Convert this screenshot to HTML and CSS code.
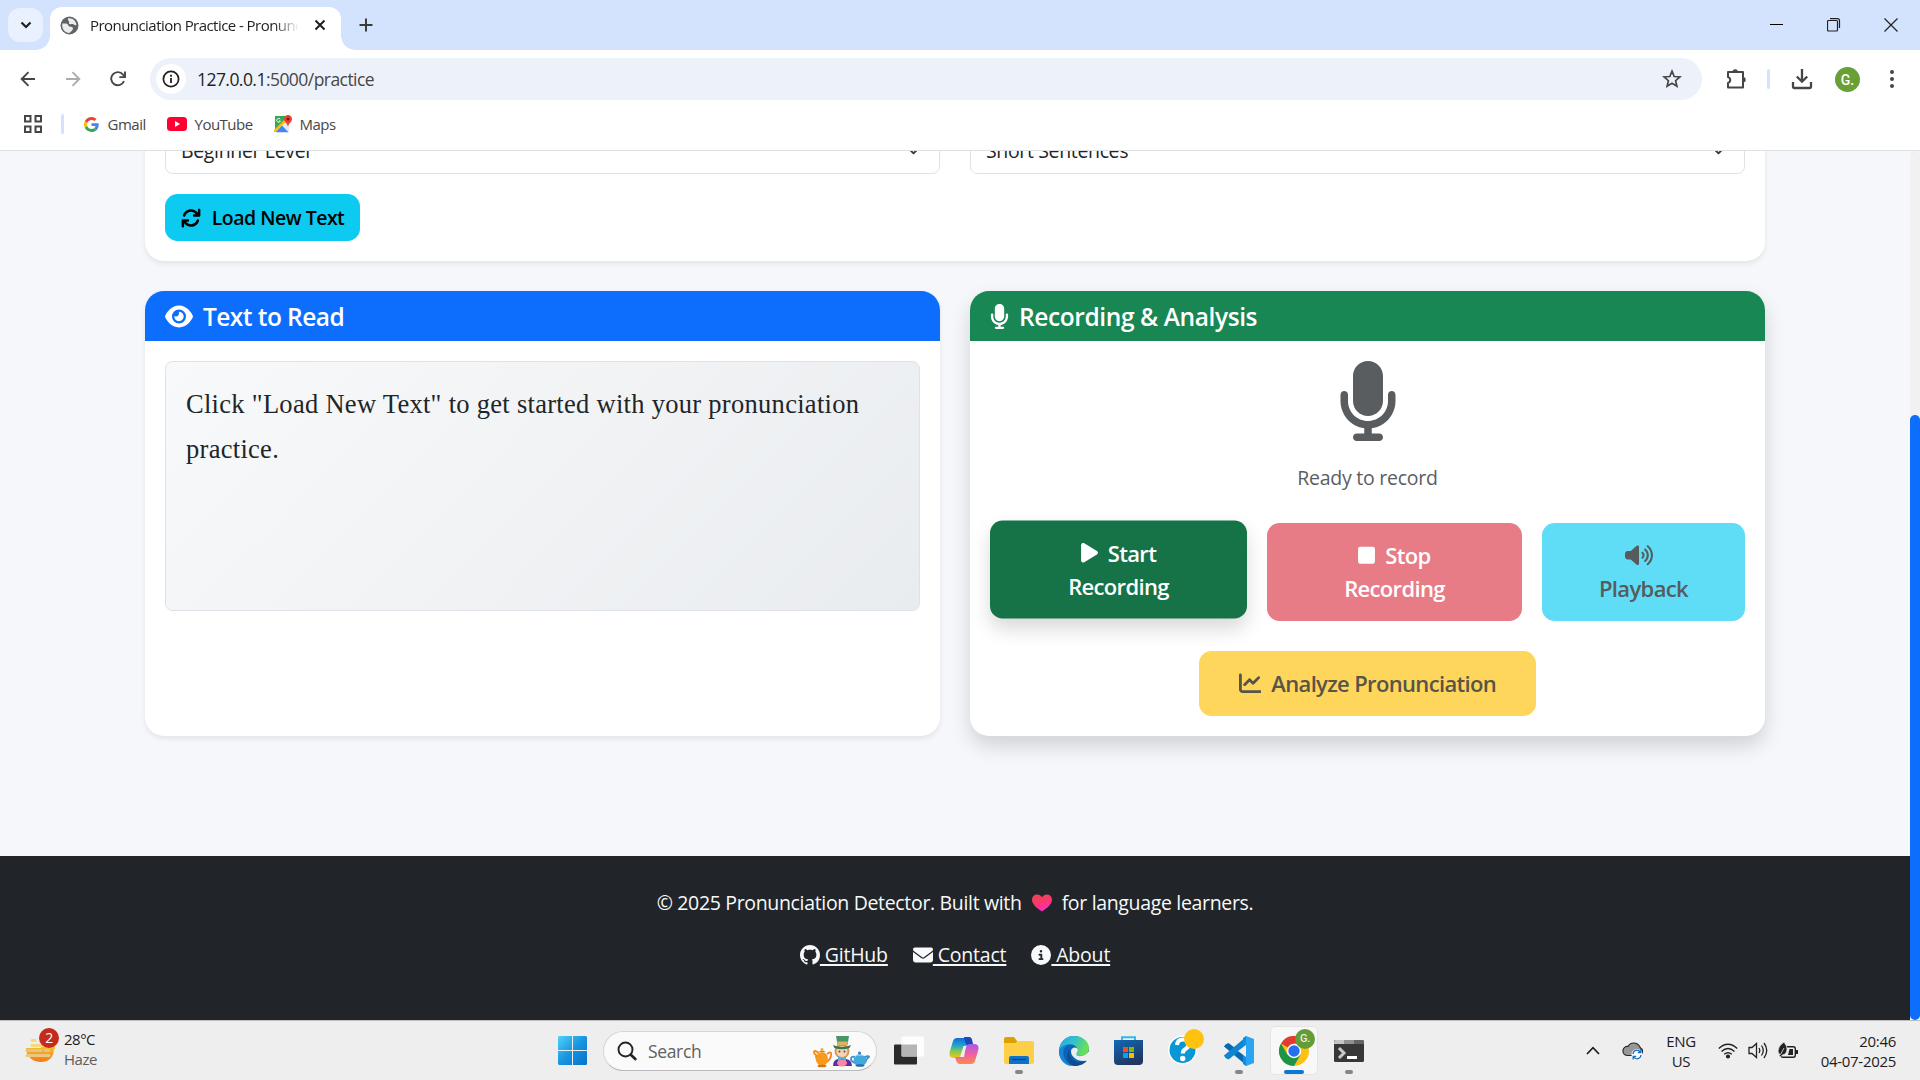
FILE: index.html
```html
<!DOCTYPE html>
<html lang="en">
<head>
<meta charset="utf-8">
<title>Pronunciation Practice - Pronunciation Detector</title>
<link rel="stylesheet" href="styles.css">
</head>
<body>
<svg class="sprite" aria-hidden="true">
  <symbol id="mic" viewBox="0 0 384 512"><path d="M192 0C139 0 96 43 96 96V256c0 53 43 96 96 96s96-43 96-96V96c0-53-43-96-96-96zM64 216c0-13.300-10.700-24-24-24s-24 10.700-24 24v40c0 89.100 66.200 162.700 152 174.400V464H120c-13.300 0-24 10.700-24 24s10.700 24 24 24h144c13.300 0 24-10.700 24-24s-10.700-24-24-24H216V430.400c85.800-11.700 152-85.300 152-174.400V216c0-13.300-10.700-24-24-24s-24 10.700-24 24v40c0 70.700-57.300 128-128 128s-128-57.300-128-128V216z"/></symbol>
</svg>

<header class="browser">
  <div class="tabstrip">
    <button class="tab-search"><svg width="12" height="8" viewBox="0 0 12 8"><path d="M1.500 1.500 6 6l4.500-4.500" fill="none" stroke="#1f1f1f" stroke-width="2.200"/></svg></button>
    <div class="tab">
      <svg width="19" height="19" viewBox="0 0 19 19"><circle cx="9.500" cy="9.500" r="9" fill="#5f6368"/><path d="M2.500 7.500c2 .2 3.500-.3 5 .8 1.300 1 .4 1.700 2 2.200 1.700.5 3.500.3 3.500 2 0 1.500-1.300 2.300-2.500 3.500-.8.8-1 1-2 .9C4.500 16.300 2.200 13 2.200 9.500zM8 2.300C7.500 4 8.500 4.500 9 5.500c.6 1.300-.8 1.700.5 2.400 1.500.8 3-.3 4.200.6 1 .7 1.300.8 2.800.6C16.300 5.500 13.500 2.300 9.500 2.200z" fill="#fff" opacity=".88"/></svg>
      <span class="tab-title">Pronunciation Practice - Pronunciation</span>
      <svg width="12" height="12" viewBox="0 0 12 12"><path d="M1.500 1.500l9 9m0-9-9 9" stroke="#1f1f1f" stroke-width="2"/></svg>
    </div>
    <svg class="new-tab" width="14" height="14" viewBox="0 0 14 14"><path d="M7 .5v13M.5 7h13" stroke="#3c3c3c" stroke-width="2"/></svg>
    <div class="window-controls">
      <svg width="14" height="14" viewBox="0 0 14 14"><path d="M0 6.500h13" stroke="#000"/></svg>
      <svg width="14" height="14" viewBox="0 0 14 14" fill="none" stroke="#222"><rect x=".5" y="2.500" width="10" height="10.500" rx="1" stroke-width="1.200"/><path d="M3 .7h7.500q2 0 2 2V10" stroke-width="1.200"/></svg>
      <svg width="14" height="14" viewBox="0 0 14 14"><path d="M.5.5l13 13m0-13-13 13" stroke="#222" stroke-width="1.200"/></svg>
    </div>
  </div>
  <div class="toolbar">
    <nav class="nav-buttons">
      <svg width="16" height="16" viewBox="0 0 16 16" fill="none" stroke="#454746" stroke-width="1.900"><path d="M15 8H2M8.500 1.200 1.700 8l6.800 6.800"/></svg>
      <svg width="16" height="16" viewBox="0 0 16 16" fill="none" stroke="#acacac" stroke-width="1.900"><path d="M1 8h13M7.500 1.200 14.300 8l-6.800 6.800"/></svg>
      <svg width="16" height="16" viewBox="0 0 16 16" fill="none" stroke="#454746" stroke-width="1.900"><path d="M14 10a6.600 6.600 0 1 1-1-6.400l1.500 1.700"/><path d="M15 .5v5.600H9.300"/></svg>
    </nav>
    <div class="omnibox">
      <span class="site-info"><svg width="18" height="18" viewBox="0 0 18 18"><circle cx="9" cy="9" r="7.600" fill="none" stroke="#1f1f1f" stroke-width="1.700"/><path d="M9 8v5M9 4.800v2" stroke="#1f1f1f" stroke-width="1.800"/></svg></span>
      <span class="url">127.0.0.1<i>:5000/practice</i></span>
      <svg class="star" width="20" height="20" viewBox="0 0 20 20"><path d="M10 2.200l2.200 5.300 5.700.5-4.300 3.700 1.300 5.600-4.900-3-4.900 3 1.300-5.600L2.100 8l5.700-.5z" fill="none" stroke="#454746" stroke-width="1.700"/></svg>
    </div>
    <div class="toolbar-actions">
      <svg width="22" height="22" viewBox="0 0 22 22"><path d="M3 4h15v15.500H3v-4.600a3 3 0 0 0 0-5.800z" fill="none" stroke="#454746" stroke-width="2" stroke-linejoin="round"/><path d="M7.500 4a2.700 2.700 0 0 1 5.400 0zM18 9a2.700 2.700 0 0 1 0 5.400z" fill="#454746"/></svg>
      <span class="divider"></span>
      <svg width="22" height="22" viewBox="0 0 22 22" fill="none" stroke="#454746" stroke-width="2.300"><path d="M11 1v12M5.800 8.500 11 13.700l5.200-5.200M2 14v4.500q0 1.500 1.500 1.500h15q1.500 0 1.500-1.500V14"/></svg>
      <span class="avatar">G.</span>
      <svg width="4" height="18" viewBox="0 0 4 18" fill="#454746"><circle cx="2" cy="2" r="2"/><circle cx="2" cy="9" r="2"/><circle cx="2" cy="16" r="2"/></svg>
    </div>
  </div>
  <div class="bookmarks">
    <svg class="apps" width="18" height="18" viewBox="0 0 18 18" fill="none" stroke="#454746" stroke-width="2"><path d="M1 1h5.500v5.500H1zM11.500 1H17v5.500h-5.500zM1 11.500h5.500V17H1zM11.500 11.500H17V17h-5.500z"/></svg>
    <span class="divider"></span>
    <a class="bm gmail"><svg width="15" height="15" viewBox="0 0 48 48"><path fill="#EA4335" d="M24 9.500c3.540 0 6.710 1.220 9.210 3.600l6.850-6.850C35.900 2.380 30.470 0 24 0 14.620 0 6.510 5.380 2.560 13.220l7.980 6.190C12.430 13.720 17.740 9.500 24 9.500z"/><path fill="#4285F4" d="M46.980 24.550c0-1.570-.15-3.090-.38-4.550H24v9.020h12.940c-.58 2.960-2.260 5.480-4.780 7.180l7.730 6c4.510-4.180 7.090-10.360 7.090-17.650z"/><path fill="#FBBC05" d="M10.530 28.590c-.48-1.450-.76-2.990-.76-4.590s.27-3.140.76-4.590l-7.980-6.190C.92 16.460 0 20.120 0 24s.92 7.540 2.560 10.780l7.970-6.190z"/><path fill="#34A853" d="M24 48c6.480 0 11.930-2.130 15.890-5.810l-7.730-6c-2.150 1.450-4.920 2.300-8.160 2.300-6.260 0-11.570-4.220-13.470-9.910l-7.980 6.190C6.510 42.620 14.620 48 24 48z"/></svg><span>Gmail</span></a>
    <a class="bm youtube"><svg width="20" height="14" viewBox="0 0 20 14"><rect width="20" height="14" rx="3.500" fill="#ff0033"/><path d="M8 4l5 3-5 3z" fill="#fff"/></svg><span>YouTube</span></a>
    <a class="bm maps"><svg width="18" height="18" viewBox="0 0 18 18"><path d="M1 1h13v16H1z" fill="#34a853"/><path d="M0 17 13 4l2 4v9z" fill="#e8eaed"/><path d="M0 15 11 4l2 1.500L1 17H0z" fill="#fbbc04"/><path d="M1.500 17.200 8 10.500l6.500 6.700z" fill="#4285f4"/><path d="M14 0a4 4 0 0 1 4 4.200C18 7 14.500 8 14 12c-.5-4-4-5-4-7.800A4 4 0 0 1 14 0z" fill="#ea4335"/><circle cx="14" cy="4" r="1.500" fill="#811411"/><path d="M6.300 4.400A1.900 1.900 0 1 0 6.400 6H4.800" stroke="#fff" stroke-width=".9" fill="none"/></svg><span>Maps</span></a>
  </div>
</header>

<div class="viewport">
  <div class="page">
    <main class="container">
      <section class="card settings">
        <div class="fields">
          <div class="select"><span>Beginner Level</span><svg width="15" height="15" viewBox="0 0 16 16"><path d="m2 5 6 6 6-6" fill="none" stroke="#343a40" stroke-width="2" stroke-linecap="round" stroke-linejoin="round"/></svg></div>
          <div class="select"><span>Short Sentences</span><svg width="15" height="15" viewBox="0 0 16 16"><path d="m2 5 6 6 6-6" fill="none" stroke="#343a40" stroke-width="2" stroke-linecap="round" stroke-linejoin="round"/></svg></div>
        </div>
        <button class="btn load"><svg width="20" height="20" viewBox="0 0 512 512"><path d="M464 16c-17.670 0-32 14.310-32 32v74.090C392.100 66.520 327.400 32 256 32 161.500 32 78.590 92.340 49.580 182.200c-5.438 16.810 3.797 34.880 20.610 40.280 16.890 5.500 34.880-3.812 40.300-20.590C130.900 138.500 189.400 96 256 96c50.500 0 96.260 24.550 124.400 64H336c-17.670 0-32 14.310-32 32s14.330 32 32 32h128c17.670 0 32-14.310 32-32V48C496 30.310 481.700 16 464 16zM441.800 289.600c-16.920-5.438-34.880 3.812-40.300 20.590C381.100 373.500 322.600 416 256 416c-50.500 0-96.250-24.550-124.400-64H176c17.670 0 32-14.310 32-32s-14.330-32-32-32h-128c-17.670 0-32 14.310-32 32v144c0 17.690 14.330 32 32 32s32-14.310 32-32v-74.090C119.900 445.500 184.600 480 255.100 480c94.450 0 177.400-60.340 206.400-150.200C467.900 313 458.600 294.100 441.800 289.600z"/></svg><span>Load New Text</span></button>
      </section>

      <div class="panels">
        <section class="card">
          <h5 class="card-header primary"><svg width="28" height="25" viewBox="0 0 576 512"><path d="M288 32c-80.800 0-145.500 36.800-192.600 80.600C48.600 156 17.300 208 2.500 243.700c-3.300 7.900-3.300 16.700 0 24.600C17.300 304 48.600 356 95.400 399.400 142.500 443.200 207.200 480 288 480s145.500-36.800 192.600-80.600c46.800-43.500 78.100-95.400 93-131.100 3.300-7.900 3.300-16.700 0-24.600-14.900-35.700-46.200-87.700-93-131.100C433.500 68.800 368.800 32 288 32zM144 256a144 144 0 1 1 288 0 144 144 0 1 1-288 0zm144-64c0 35.300-28.700 64-64 64-7.100 0-13.900-1.200-20.300-3.300-5.500-1.800-11.900 1.600-11.700 7.400.3 6.900 1.300 13.800 3.200 20.700 13.700 51.200 66.400 81.600 117.600 67.900s81.600-66.400 67.900-117.600c-11.100-41.500-47.800-69.400-88.600-71.100-5.800-.2-9.200 6.100-7.400 11.700 2.100 6.400 3.300 13.200 3.300 20.300z"/></svg><span>Text to Read</span></h5>
          <div class="card-body">
            <p class="reading">Click "Load New Text" to get started with your pronunciation practice.</p>
          </div>
        </section>
        <section class="card raised">
          <h5 class="card-header success"><svg width="19" height="25"><use href="#mic"/></svg><span>Recording &amp; Analysis</span></h5>
          <div class="card-body recorder">
            <svg class="big-mic" width="60" height="80"><use href="#mic"/></svg>
            <p class="status">Ready to record</p>
            <div class="controls">
              <button class="btn lg start"><span class="line"><svg width="17" height="22.500" viewBox="0 0 384 512"><path d="M73 39c-14.800-9.100-33.400-9.400-48.500-.9S0 62.600 0 80V432c0 17.400 9.400 33.400 24.500 41.900s33.700 8.100 48.500-.9L361 297c14.300-8.700 23-24.200 23-41s-8.700-32.200-23-41L73 39z"/></svg>Start</span><span>Recording</span></button>
              <button class="btn lg stop"><span class="line"><svg width="17" height="22.500" viewBox="0 0 384 512"><path d="M0 112c0-27 21-48 48-48H336c27 0 48 21 48 48V400c0 27-21 48-48 48H48c-27 0-48-21-48-48V112z"/></svg>Stop</span><span>Recording</span></button>
              <button class="btn lg play"><span class="line"><svg width="28" height="22.500" viewBox="0 0 640 512"><path d="M533.600 32.500C598.500 85.300 640 165.800 640 256s-41.500 170.800-106.400 223.500c-10.300 8.400-25.400 6.800-33.800-3.500s-6.800-25.400 3.500-33.800C557.500 398.200 592 331.200 592 256s-34.500-142.200-88.700-186.300c-10.300-8.400-11.800-23.500-3.500-33.800s23.500-11.800 33.800-3.500zM473.100 107c43.200 35.200 70.900 88.900 70.900 149s-27.700 113.800-70.900 149c-10.300 8.400-25.400 6.800-33.800-3.500s-6.800-25.400 3.500-33.800C475.300 341.300 496 301.100 496 256s-20.700-85.300-53.200-111.800c-10.300-8.400-11.800-23.500-3.500-33.800s23.500-11.800 33.800-3.500zm-60.500 74.500C434.100 199.100 448 225.900 448 256s-13.900 56.900-35.400 74.500c-10.300 8.400-25.400 6.800-33.800-3.500s-6.800-25.400 3.500-33.800C393.100 284.400 400 271 400 256s-6.900-28.400-17.700-37.300c-10.300-8.400-11.800-23.500-3.500-33.800s23.500-11.800 33.800-3.500zM301.100 34.800C312.600 40 320 51.400 320 64V448c0 12.600-7.400 24-18.900 29.200s-25 3.100-34.400-5.300L131.800 352H64c-35.300 0-64-28.700-64-64V224c0-35.300 28.700-64 64-64h67.800L266.700 40.100c9.400-8.400 22.900-10.400 34.400-5.300z"/></svg></span><span>Playback</span></button>
            </div>
            <button class="btn lg analyze"><span class="line"><svg width="22.500" height="22.500" viewBox="0 0 512 512"><path d="M64 64c0-17.700-14.300-32-32-32S0 46.300 0 64V400c0 44.200 35.800 80 80 80H480c17.700 0 32-14.300 32-32s-14.300-32-32-32H80c-8.800 0-16-7.200-16-16V64zm406.600 86.600c12.500-12.500 12.500-32.800 0-45.300s-32.800-12.500-45.300 0L320 210.700l-57.400-57.400c-12.500-12.500-32.800-12.500-45.300 0l-112 112c-12.500 12.500-12.500 32.800 0 45.300s32.800 12.500 45.300 0L240 221.300l57.400 57.400c12.500 12.500 32.800 12.500 45.300 0l128-128z"/></svg>Analyze Pronunciation</span></button>
          </div>
        </section>
      </div>
    </main>

    <footer class="footer">
      <p class="copyright"><span>© 2025 Pronunciation Detector. Built with</span><svg width="20" height="18" viewBox="0 0 20 18"><defs><linearGradient id="heart" x1="0" y1="0" x2=".4" y2="1"><stop offset="0" stop-color="#e8455a"/><stop offset=".5" stop-color="#fb3a62"/><stop offset="1" stop-color="#fb2cc0"/></linearGradient></defs><path d="M10 17.500C4 13.500 0 10 0 5.500A5 5 0 0 1 5 .5c2.300 0 4 1.200 5 2.800C11 1.700 12.700.5 15 .5a5 5 0 0 1 5 5c0 4.500-4 8-10 12z" fill="url(#heart)"/></svg><span>for language learners.</span></p>
      <nav class="links">
        <a><svg width="20" height="20" viewBox="0 0 16 16"><path d="M8 0C3.580 0 0 3.580 0 8c0 3.540 2.290 6.530 5.470 7.590.4.070.55-.17.55-.38 0-.19-.01-.82-.01-1.490-2.010.37-2.530-.49-2.690-.94-.09-.23-.48-.94-.82-1.130-.28-.15-.68-.52-.01-.53.63-.01 1.080.58 1.230.82.72 1.210 1.870.87 2.330.66.070-.52.280-.87.510-1.070-1.780-.2-3.640-.89-3.640-3.950 0-.87.310-1.590.820-2.150-.08-.2-.36-1.020.08-2.120 0 0 .67-.21 2.200.82.640-.18 1.320-.27 2-.27s1.360.09 2 .27c1.530-1.040 2.200-.82 2.200-.82.440 1.100.160 1.920.080 2.120.510.560.820 1.270.820 2.150 0 3.070-1.870 3.750-3.650 3.950.290.250.540.730.540 1.480 0 1.070-.01 1.930-.01 2.200 0 .210.150.460.550.380A8.010 8.010 0 0 0 16 8c0-4.420-3.580-8-8-8z"/></svg><span>&nbsp;GitHub</span></a>
        <a><svg width="20" height="20" viewBox="0 0 512 512"><path d="M48 64C21.500 64 0 85.500 0 112c0 15.100 7.100 29.300 19.200 38.400L236.800 313.600c11.400 8.500 27 8.500 38.400 0L492.800 150.400c12.100-9.100 19.200-23.300 19.200-38.400 0-26.500-21.500-48-48-48H48zM0 176V384c0 35.300 28.700 64 64 64H448c35.300 0 64-28.700 64-64V176L294.400 339.200c-22.800 17.100-54 17.100-76.800 0L0 176z"/></svg><span>&nbsp;Contact</span></a>
        <a><svg width="20" height="20" viewBox="0 0 512 512"><path d="M256 512A256 256 0 1 0 256 0a256 256 0 1 0 0 512zM216 336h24V272H216c-13.300 0-24-10.700-24-24s10.700-24 24-24h48c13.300 0 24 10.700 24 24v88h8c13.300 0 24 10.700 24 24s-10.700 24-24 24H216c-13.300 0-24-10.700-24-24s10.700-24 24-24zm40-208a32 32 0 1 1 0 64 32 32 0 1 1 0-64z"/></svg><span>&nbsp;About</span></a>
      </nav>
    </footer>
  </div>
  <div class="scrollbar"><div class="thumb"></div></div>
</div>

<div class="taskbar">
  <div class="weather">
    <div class="weather-icon">
      <svg width="32" height="28" viewBox="0 0 32 28"><defs><linearGradient id="sun" x1="0" y1="0" x2="0" y2="1"><stop offset="0" stop-color="#f7b92c"/><stop offset="1" stop-color="#f07a17"/></linearGradient></defs><path d="M1 12h28q0 14-14 14Q5 26 1 15z" fill="url(#sun)"/><path d="M16 8h14v5H16z" fill="#f7b92c"/><g stroke-linecap="round" stroke-width="3"><path d="M7 4.500h3M7 9.500h12" stroke="#f6d77c"/><path d="M2 14.500h14M20 14.500h4" stroke="#dcc788"/><path d="M2 19.500h22" stroke="#edc77c"/></g></svg>
      <span class="count">2</span>
    </div>
    <div class="weather-text"><span>28°C</span><span class="muted">Haze</span></div>
  </div>
  <div class="center">
    <svg class="start-logo" width="29" height="29" viewBox="0 0 29 29"><defs><linearGradient id="win" x1="0" y1="0" x2="1" y2="1"><stop offset="0" stop-color="#4fd2fb"/><stop offset=".5" stop-color="#1795e0"/><stop offset="1" stop-color="#0670cc"/></linearGradient></defs><path d="M1 0h13v14H0V1zM15 0h13l1 1v13H15zM0 15h14v14H1l-1-1zM15 15h14v13l-1 1H15z" fill="url(#win)"/></svg>
    <div class="search">
      <svg width="20" height="20" viewBox="0 0 20 20" fill="none" stroke="#252525" stroke-linecap="round"><circle cx="8.500" cy="8.500" r="7" stroke-width="1.900"/><path d="M13.800 13.800l4.500 4.200" stroke-width="2.700"/></svg>
      <span>Search</span>
      <svg class="doodle" width="57" height="34" viewBox="0 0 57 34">
        <path d="M6 20q-4-5-5-2 0 2 2 3 0 5 3 8M14 20q5-4 4 2-1 4-4 6" fill="none" stroke="#f08314" stroke-width="1.800"/><ellipse cx="9" cy="25" rx="6" ry="7" fill="#f89a1c"/><path d="M5 18q4-3 8 0z" fill="#ed7a10"/><circle cx="9" cy="15.500" r="1.500" fill="#f5a63a"/><ellipse cx="9" cy="32" rx="4.500" ry="1.300" fill="#dc6f10"/>
        <path d="M20 32q0-6 5-7h8q6 1 6 7z" fill="#5b2fa3"/><circle cx="29" cy="17" r="7.500" fill="#d8934e"/><circle cx="29" cy="17.500" r="5.500" fill="#fbd0ae"/><path d="M23 2h13l-1.500 9h-10z" fill="#4b9468"/><path d="M24.300 7.500h10.500l-.6 3.500h-9.400z" fill="#d8b55e"/><path d="M20 11q9 4 18 0l-1.500 3q-7.500 2.500-15 0z" fill="#2f7a51"/><circle cx="26.500" cy="17.500" r="1" fill="#245378"/><circle cx="31.500" cy="17.500" r="1" fill="#245378"/><path d="M25 22l4 2 4-2v5l-4-2-4 2z" fill="#45b5ea"/><ellipse cx="29" cy="29" rx="5" ry="3.500" fill="#fb87a4"/>
        <path d="M50 24q6-3 6-1-2 1-4 6M42 23q-4-1-4 2t5 4" fill="none" stroke="#3b91ca" stroke-width="1.800"/><ellipse cx="47" cy="26.500" rx="6.500" ry="5.500" fill="#43a9dd"/><path d="M42 22q5-4 9 0z" fill="#80c9ec"/><circle cx="46.500" cy="19" r="1.500" fill="#2c7dba"/><ellipse cx="47" cy="31.500" rx="4.500" ry="1.300" fill="#286ca7"/>
      </svg>
    </div>
    <div class="apps-row">
      <span class="app"><svg width="30" height="30" viewBox="0 0 30 30"><rect y="8.500" width="23" height="20" rx="1" fill="#2a2a29"/><rect x="7.500" y=".5" width="22.500" height="20" rx="1" fill="#fdfdfd"/><path d="M8 8.500h15v12H8z" fill="#b5b5b5"/></svg></span>
      <span class="app"><svg width="30" height="28" viewBox="0 0 30 28"><defs><linearGradient id="cpA" x1="0" y1="0" x2="0" y2="1"><stop offset="0" stop-color="#1b67d3"/><stop offset=".35" stop-color="#1e9fd9"/><stop offset=".65" stop-color="#7fc950"/><stop offset="1" stop-color="#f6c51b"/></linearGradient><linearGradient id="cpB" x1="0" y1="0" x2="0" y2="1"><stop offset="0" stop-color="#a95be8"/><stop offset=".5" stop-color="#ef5fa4"/><stop offset="1" stop-color="#fb8b4c"/></linearGradient></defs><path d="M8 1h11q3 0 4 4l1 3h-5q-3 0-4 4l-2 6q-1 3-4 3H5q-6 0-4-7L4 4Q5 1 8 1z" fill="url(#cpA)"/><path d="M15 0h5q3 0 3.500 5l1 4h-6q-2-1-3.500-9z" fill="#1849bd"/><path d="M22 27H11q-3 0-4-4l-1-3h5q3 0 4-4l2-6q1-3 4-3h4q6 0 4 7l-3 10q-1 3-4 3z" fill="url(#cpB)"/><path d="M17 9h-2.500L11 20h4z" fill="#eee"/></svg></span>
      <span class="app running"><svg width="30" height="27" viewBox="0 0 30 27"><path d="M0 2q0-2 2-2h8l3 4v4H0z" fill="#dda000"/><path d="M0 6h11l3-2h14q2 0 2 2v19q0 2-2 2H2q-2 0-2-2z" fill="#fdcf45"/><path d="M5 27v-6q0-2 2-2h16q2 0 2 2v6z" fill="#0c73c9"/><path d="M8 22.500h14" stroke="#07407c" stroke-width="1.200"/></svg></span>
      <span class="app"><svg width="30" height="30" viewBox="0 0 30 30"><defs><linearGradient id="edA" x1="0" y1="0" x2="1" y2=".3"><stop offset="0" stop-color="#2ba8e8"/><stop offset=".5" stop-color="#2fc0cf"/><stop offset="1" stop-color="#6bdf58"/></linearGradient></defs><circle cx="15" cy="15" r="15" fill="#0d63b5"/><path d="M0 15A15 15 0 0 1 15 0c9 0 15 6 15 12 0 5-4 8-9 8-3 0-4-1-4-2 0-1 1.500-1.500 1.500-4 0-3-3-5.500-7-5.500C6 8.500 2 11 0 15z" fill="url(#edA)"/><path d="M0 15c2-5 6-6.500 10-6.500-5 2-6 6-5.500 10 .6 5 4 9.500 9 11.500C5 30 0 23 0 15z" fill="#1687d8"/><path d="M11 14c-2 6 3 13 10 12 4 0 6-2 7-1.500-2 3-7 5.500-12 5.500C7 28 6 18 11 14z" fill="#0f4c91"/><path d="M12 15.500a3.600 3.600 0 0 1 6.800-2c.4 2.500-1.800 3.500-1.600 4.800.3 1.400 2.500 2 4.800 1.800 4-.3 6-2.500 8.500-5.600L31 23l-3 1.500c-3 .8-8 .8-11-1.500-3-2.200-5-4-5-7.500z" fill="#eee"/></svg></span>
      <span class="app"><svg width="29" height="29" viewBox="0 0 29 29"><defs><linearGradient id="st" x1="0" y1="0" x2=".5" y2="1"><stop offset="0" stop-color="#0f6ab9"/><stop offset="1" stop-color="#203760"/></linearGradient></defs><path d="M8 5V1.200h13V5" fill="none" stroke="#2fb9ee" stroke-width="2"/><path d="M0 4h29v21q0 4-4 4H4q-4 0-4-4z" fill="url(#st)"/><path d="M9 11h5v5H9z" fill="#f25022"/><path d="M15 11h5v5h-5z" fill="#7fba00"/><path d="M9 17h5v5H9z" fill="#00a4ef"/><path d="M15 17h5v5h-5z" fill="#ffb900"/></svg></span>
      <span class="app help"><svg width="38" height="38" viewBox="0 0 38 38"><circle cx="16.500" cy="23" r="14.500" fill="#fff"/><circle cx="16.500" cy="23" r="13" fill="#0798d5"/><path d="M11 18q.5-5.500 6-5.500t5.500 5q0 3-3 4.500-2.700 1.500-2.700 4.500" fill="none" stroke="#fff" stroke-width="4"/><circle cx="16.700" cy="31.500" r="2.700" fill="#fff"/><circle cx="28" cy="12" r="10" fill="#ffc20e"/></svg></span>
      <span class="app running"><svg width="30" height="30" viewBox="0 0 30 30"><path d="M1.500 8.500l3-1.500L23 21v9L0 10.500z" fill="#0869b3"/><path d="M1.500 22l3 1.500L23 9V0L0 19.500z" fill="#0f84d0"/><path d="M22 0l8 3v24l-8 3z" fill="#2aa5f4"/><path d="M22 0v30l-3-2V2z" fill="#118ee2"/><path d="M22 9v12l-8-6z" fill="#eee"/></svg></span>
      <span class="app active"><svg width="30" height="30" viewBox="0 0 30 30"><circle cx="15" cy="15" r="15" fill="#fbc116"/><path d="M15 15 2 7.500A15 15 0 0 1 28 7.500H15z" fill="#e33b2e"/><path d="M2 7.500A15 15 0 0 0 15 30l6.500-11.200L15 15 8.500 18.800z" fill="#1e9447"/><circle cx="15" cy="15" r="7.200" fill="#fff"/><circle cx="15" cy="15" r="5.700" fill="#256ff0"/></svg><span class="profile">G.</span></span>
      <span class="app running"><svg width="30" height="22" viewBox="0 0 30 22"><rect width="30" height="22" rx="1.500" fill="#373737"/><path d="M1.500 0H10v4H0V1.500z" fill="#c5c5c5"/><path d="M10 0h10v4H10z" fill="#919191"/><path d="M20 0h8.500L30 1.500V4H20z" fill="#656565"/><path d="M5 8l5 5-5 5" fill="none" stroke="#c9c9c9" stroke-width="3"/><path d="M13 17.500h10" stroke="#fff" stroke-width="3"/></svg></span>
    </div>
  </div>
  <div class="tray">
    <svg class="chev" width="14" height="9" viewBox="0 0 14 9"><path d="M1 8l6-6.300L13 8" fill="none" stroke="#1d1d1d" stroke-width="1.700"/></svg>
    <svg class="cloud" width="21" height="18" viewBox="0 0 21 18"><path d="M5 13.500h12a4 4 0 0 0 1.500-7.500C17 2.500 14.500 1 11.500 1 9 1 7 2.500 6 4.500a4.500 4.500 0 0 0-1 9z" fill="#979797" stroke="#262626" stroke-width="1.200"/><circle cx="15" cy="12.500" r="5.500" fill="#fff"/><path d="M11 12a4 4 0 0 1 7.300-2M19 13a4 4 0 0 1-7.300 2M18.800 7.500v3h-3M11.200 17.500v-3h3" fill="none" stroke="#1670c5" stroke-width="1.300"/></svg>
    <div class="lang"><span>ENG</span><span>US</span></div>
    <svg class="wifi" width="20" height="16" viewBox="0 0 20 16" fill="none" stroke="#222" stroke-width="1.400"><path d="M.8 5.500q9.200-8.500 18.400 0M3.500 8.500q6.500-6 13 0M6.200 11.300q3.800-3.300 7.600 0"/><circle cx="10" cy="13.500" r="1.400" fill="#222"/></svg>
    <svg class="sound" width="20" height="17" viewBox="0 0 20 17" fill="none" stroke="#222" stroke-width="1.300"><path d="M1 5.500h3l4.500-4v14l-4.500-4H1z"/><path d="M11 6q1.500 2.500 0 5M13.500 3.500q3.500 5 0 10M16 1q5.500 7.500 0 15"/></svg>
    <svg class="battery" width="20" height="17" viewBox="0 0 20 17"><rect x="3" y="4.700" width="14.300" height="10.600" rx="2" fill="none" stroke="#222" stroke-width="1.400"/><path d="M18 8h2v4h-2z" fill="#222"/><path d="M11.500 7h3.500v6h-5z" fill="#222"/><path d="M0 9q0-5 6-9 3 4 3 7 0 5-4.500 6l-2.500 2L1 14l1-1.500Q0 11 0 9z" fill="#222" stroke="#eee" stroke-width=".7"/><path d="M2.500 12.500 6 6" stroke="#eee" stroke-width=".8"/></svg>
    <div class="clock"><span>20:46</span><span>04-07-2025</span></div>
  </div>
</div>
</body>
</html>
```
FILE: styles.css
```css
* { box-sizing: border-box; }
body { margin: 0; width: 1920px; height: 1080px; overflow: hidden; display: flex; flex-direction: column; background: #fff; color: #212529; font-family: "Open Sans", "Noto Sans", sans-serif; font-size: 20px; }
svg { display: block; flex: none; }
p, h5 { margin: 0; }
button { font: inherit; border: 0; padding: 0; }
.sprite { position: absolute; width: 0; height: 0; }

/* Browser chrome */
.browser { height: 151px; flex: none; border-bottom: 1px solid #dfe0e2; background: #fff; }
.tabstrip { height: 50px; display: flex; align-items: center; background: #d3e2fd; padding-left: 8px; }
.tab-search { width: 35px; height: 34px; border-radius: 12px; background: #e9f0fe; display: flex; align-items: center; justify-content: center; }
.tab { width: 291px; height: 43px; margin: 7px 0 0 7px; border-radius: 12px 12px 0 0; background: #fff; display: flex; align-items: center; padding: 0 15px 7px 10px; position: relative; }
.tab::before, .tab::after { content: ""; position: absolute; bottom: 0; width: 14px; height: 14px; }
.tab::before { left: -14px; background: radial-gradient(circle at 0 0, transparent 13.5px, #fff 14px); }
.tab::after { right: -14px; background: radial-gradient(circle at 100% 0, transparent 13.5px, #fff 14px); }
.tab-title { flex: 1; margin: 0 15px 0 11px; font-size: 15px; letter-spacing: -.55px; white-space: nowrap; overflow: hidden; color: #1f1f1f; mask-image: linear-gradient(90deg, #000 88%, transparent); }
.new-tab { margin-left: 18px; }
.window-controls { margin-left: auto; display: flex; gap: 43px; padding-right: 22px; }
.toolbar { height: 50px; display: flex; align-items: center; padding-top: 8px; }
.nav-buttons { display: flex; gap: 29px; margin-left: 20px; width: 130px; padding-bottom: 1px; }
.omnibox { width: 1552px; height: 42px; border-radius: 21px; background: #ecf1fa; display: flex; align-items: center; padding: 0 20px 0 6px; }
.site-info { width: 30px; height: 30px; border-radius: 50%; background: #fff; display: flex; align-items: center; justify-content: center; }
.url { margin-left: 11px; font-size: 17.500px; letter-spacing: -.55px; color: #1f1f1f; flex: 1; }
.url i { font-style: normal; color: #474747; }
.toolbar-actions { display: flex; align-items: center; margin-left: 23px; flex: 1; }
.divider { width: 3px; height: 20px; border-radius: 2px; background: #d3e3fd; }
.toolbar-actions .divider { margin: 0 21px 0 20px; }
.avatar { width: 25px; height: 25px; border-radius: 50%; background: #68a036; color: #fff; font: 500 14px/26px Roboto, sans-serif; text-align: center; margin: 0 30px 0 22px; }
.bookmarks { height: 48px; display: flex; align-items: center; padding-left: 23.500px; font-size: 15px; color: #474747; }
.bookmarks .divider { margin: 0 20px 0 19px; }
.bm { display: flex; align-items: center; letter-spacing: -.5px; }
.gmail { width: 83px; gap: 9px; }
.youtube { width: 107px; gap: 8px; }
.maps { gap: 8px; }

/* Page */
.viewport { height: 869px; flex: none; display: flex; overflow: hidden; background: #f5f7fb; }
.page { width: 1910px; display: flex; flex-direction: column; margin-top: -44px; }
.container { width: 1620px; margin: 0 auto; display: flex; flex-direction: column; gap: 30px; flex: 1; }
.card { background: #fff; border-radius: 19px; box-shadow: 0 2.500px 5px rgba(0,0,0,.075); overflow: hidden; }
.raised { box-shadow: 0 10px 20px rgba(0,0,0,.15); }
.settings { padding: 20px; height: 154px; }
.fields { display: grid; grid-template-columns: 1fr 1fr; gap: 30px; }
.select { height: 47px; border: 1px solid #dee2e6; border-radius: 7.500px; display: flex; align-items: center; justify-content: space-between; padding: 0 18px 0 15px; font-size: 19.500px; letter-spacing: -.35px; }
.btn { border-radius: 12.500px; font-weight: 600; white-space: nowrap; display: flex; align-items: center; justify-content: center; }
.load { width: 195px; height: 47px; margin-top: 20px; background: #0dcaf0; color: #000; gap: 11px; font-size: 19.500px; letter-spacing: -.5px; }
.panels { display: grid; grid-template-columns: 1fr 1fr; gap: 30px; height: 445px; }
.card-header { height: 50px; padding: 0 20px; display: flex; align-items: center; gap: 10px; color: #fff; font-size: 24.500px; font-weight: 600; letter-spacing: -.4px; }
.card-header svg, .footer svg, .btn svg { fill: currentColor; }
.primary { background: #0d6efd; letter-spacing: -.55px; }
.success { background: #198754; }
.card-body { padding: 20px; }
.reading { height: 250px; padding: 20px; border: 1px solid #dee2e6; border-radius: 7.500px; background: linear-gradient(135deg, #f8f9fa, #e9ecef); font: 26.500px/45px Georgia, "Liberation Serif", serif; letter-spacing: .29px; }
.recorder { display: flex; flex-direction: column; align-items: center; }
.big-mic { fill: #595d60; }
.status { margin-top: 22px; height: 30px; line-height: 30px; font-size: 19.500px; letter-spacing: -.25px; color: #5a5e62; }
.controls { display: grid; grid-template-columns: 257px 255px 203px; gap: 20px; margin-top: 30px; }
.lg { flex-direction: column; height: 98px; font-size: 22px; letter-spacing: -.65px; line-height: 33.500px; }
.line { display: flex; align-items: center; justify-content: center; gap: 10px; height: 33px; }
.start { background: #157347; color: #fff; transform: translateY(-2.500px); box-shadow: 0 10px 19px rgba(0,0,0,.15); }
.stop { background: #e77c86; color: #fff; }
.play { background: #5fddf6; color: #565b5d; }
.play .line { padding-right: 10px; }
.analyze { width: 337px; height: 65px; margin-top: 30px; background: #ffd65c; color: #575448; }
.footer { height: 164px; flex: none; background: #212529; color: #f8f9fa; display: flex; flex-direction: column; align-items: center; padding-top: 32px; font-size: 19.500px; letter-spacing: -.33px; line-height: 30px; }
.copyright { display: flex; align-items: center; gap: 10px; }
.links { display: flex; gap: 25px; margin-top: 22px; letter-spacing: -.2px; }
.links a { display: flex; align-items: center; }
.links span { text-decoration: underline; text-decoration-thickness: 2px; text-underline-offset: 2px; }
.scrollbar { width: 10px; height: 869px; background: #f1f1f1; border-radius: 5px; padding-top: 264px; margin-top: 0; }
.thumb { height: 605px; border-radius: 5px; background: #0d6efd; }

/* Taskbar */
.taskbar { height: 60px; flex: none; background: #eee; border-top: 1px solid #bdbdbd; display: flex; font-size: 15px; letter-spacing: -.3px; color: #1c1c1c; }
.weather { width: 557px; display: flex; padding: 7px 0 0 25px; }
.weather-icon { position: relative; width: 39px; padding-top: 8px; }
.count { position: absolute; left: 14px; top: 0; width: 20px; height: 20px; border-radius: 50%; background: #c42b1c; color: #fff; font-size: 14px; line-height: 20px; text-align: center; }
.weather-text, .lang, .clock { display: flex; flex-direction: column; line-height: 20px; }
.weather-text { padding-top: 1px; letter-spacing: -.5px; }
.muted { color: #5d5d5d; }
.center { display: flex; align-items: center; width: 1018px; }
.start-logo { margin: 0 16px 0 1px; }
.search { width: 274px; height: 40px; border: 1px solid #d6d6d6; border-bottom-color: #bbb; border-radius: 20px; background: #fafafa; display: flex; align-items: center; padding: 0 6px 0 13px; gap: 11px; font-size: 17.500px; letter-spacing: -.35px; color: #606060; }
.doodle { margin-left: auto; }
.apps-row { display: flex; margin-left: 4px; height: 59px; }
.app { width: 55px; display: flex; align-items: center; justify-content: center; position: relative; }
.running::after, .active::after { content: ""; position: absolute; bottom: 6px; width: 8px; height: 4px; border-radius: 2px; background: #868686; }
.active::after { width: 20px; background: #0a78d4; }
.active::before { content: ""; position: absolute; inset: 5px 3px 5px 4px; border: 1px solid #e5e5e5; border-radius: 5px; background: #f8f8f8; }
.active svg { position: relative; }
.help svg { margin: -9px 0 0 2px; }
.profile { position: absolute; left: 29px; top: 8px; width: 20px; height: 20px; border-radius: 50%; background: #649c38; color: #e8f1df; font: 500 11px/20px Roboto, sans-serif; text-align: center; }
.tray { display: flex; align-items: center; flex: 1; }
.chev { margin-left: 11px; }
.cloud { margin-left: 22px; }
.lang { width: 58px; margin-left: 9px; align-items: center; }
.wifi { margin-left: 8px; }
.sound { margin-left: 10px; }
.battery { margin-left: 10px; }
.clock { margin-left: auto; margin-right: 24px; align-items: flex-end; }
```
